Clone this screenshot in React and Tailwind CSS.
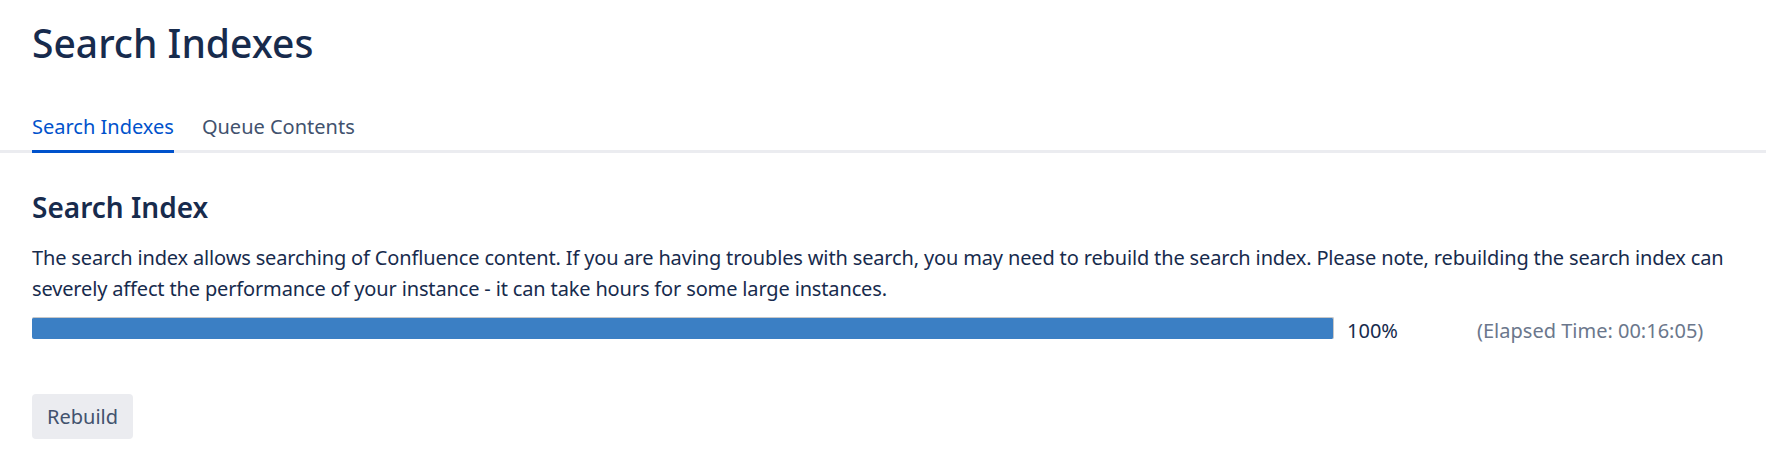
export default function App() {
  return (
    <div className="min-h-[465px] bg-white font-['Noto_Sans',sans-serif] text-[#172b4d]">
      <div className="px-8 pt-[16px]">
        <h1 className="text-[39px] leading-[54px] font-medium">Search Indexes</h1>
      </div>

      <div className="mt-[43px] border-b-[3px] border-[#ebecf0]">
        <div className="flex gap-7 px-8">
          <div className="-mb-[3px] border-b-[3px] border-[#0052cc] pb-[9px] text-[20px] leading-[28px] text-[#0052cc]">
            Search Indexes
          </div>
          <div className="pb-[9px] text-[20px] leading-[28px] text-[#42526e]">Queue Contents</div>
        </div>
      </div>

      <div className="px-8 pt-[36px]">
        <h2 className="text-[28px] leading-[36px] font-semibold">Search Index</h2>
        <p className="mt-[17px] text-[20px] leading-[31px] tracking-[-0.15px]">
          The search index allows searching of Confluence content. If you are having troubles with search, you may need to
          rebuild the search index. Please note, rebuilding the search index can severely affect the performance of your
          instance - it can take hours for some large instances.
        </p>

        <div className="mt-[7px] flex items-center">
          <div className="h-[22px] w-[1302px] rounded-[2px] border-t border-r border-[#c8c8c8] bg-[#3b7fc4]" />
          <span className="ml-[13px] w-[130px] text-[20px] leading-[28px] mt-[6px]">100%</span>
          <span className="text-[20px] leading-[28px] mt-[6px] text-[#6b778c]">(Elapsed Time: 00:16:05)</span>
        </div>

        <button
          type="button"
          className="mt-[49px] h-[45px] rounded-[4px] bg-[#ebecf0] px-[15px] text-[20px] text-[#42526e]"
        >
          Rebuild
        </button>
      </div>
    </div>
  );
}
